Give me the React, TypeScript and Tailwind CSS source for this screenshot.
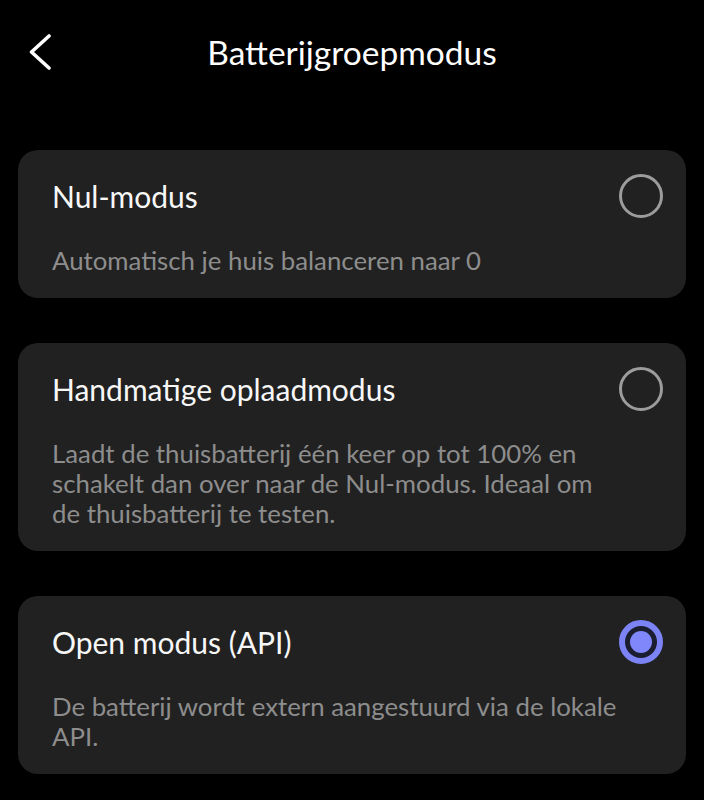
import React, { useState } from 'react';

type Mode = {
    id: string;
    title: string;
    description: string;
};

const modes: Mode[] = [
    { id: 'zero', title: 'Nul-modus', description: 'Automatisch je huis balanceren naar 0' },
    {
        id: 'manual',
        title: 'Handmatige oplaadmodus',
        description: 'Laadt de thuisbatterij één keer op tot 100% en schakelt dan over naar de Nul-modus. Ideaal om de thuisbatterij te testen.',
    },
    { id: 'api', title: 'Open modus (API)', description: 'De batterij wordt extern aangestuurd via de lokale API.' },
];

const Radio: React.FC<{ checked: boolean }> = ({ checked }) => {
    if (checked) {
        return (
            <div className="w-[44px] h-[44px] rounded-full border-[6px] border-[#7c83f5] bg-[#1b1d30] flex items-center justify-center shrink-0">
                <div className="w-[22px] h-[22px] rounded-full bg-[#7f87fb]" />
            </div>
        );
    }
    return <div className="w-[44px] h-[44px] rounded-full border-[3px] border-[#9c9c9c] shrink-0" />;
};

export default function App() {
    const [selected, setSelected] = useState('api');

    return (
        <div className="min-h-[800px] bg-black text-white font-['Lato','Noto_Sans',sans-serif]">
            {/* Header */}
            <div className="h-[104px] grid grid-cols-[1fr_auto_1fr] items-center px-[29px]">
                <button className="w-[22px] h-[36px] flex items-center">
                    <svg width="22" height="36" viewBox="0 0 22 36" fill="none">
                        <polyline points="20,2 2.5,18 20,34" stroke="white" strokeWidth="3.6" strokeLinecap="round" strokeLinejoin="round" />
                    </svg>
                </button>
                <h1 className="text-[33.5px] leading-[40px] font-normal text-white">Batterijgroepmodus</h1>
                <div />
            </div>

            {/* Mode cards */}
            <div className="mt-[46px] px-[18px] flex flex-col gap-[45px]">
                {modes.map(mode => (
                    <div
                        key={mode.id}
                        onClick={() => setSelected(mode.id)}
                        className="bg-[#212121] rounded-[20px] pl-[34px] pr-[23px] pt-[28px] pb-[23px] cursor-pointer"
                    >
                        <div className="h-[36px] flex items-center justify-between">
                            <div className="text-[30px] leading-[36px] text-[#f7f7f7]">{mode.title}</div>
                            <Radio checked={selected === mode.id} />
                        </div>
                        <p className="mt-[31px] pr-[36px] text-[25.8px] leading-[30px] text-[#8d8d8d]">{mode.description}</p>
                    </div>
                ))}
            </div>
        </div>
    );
}
